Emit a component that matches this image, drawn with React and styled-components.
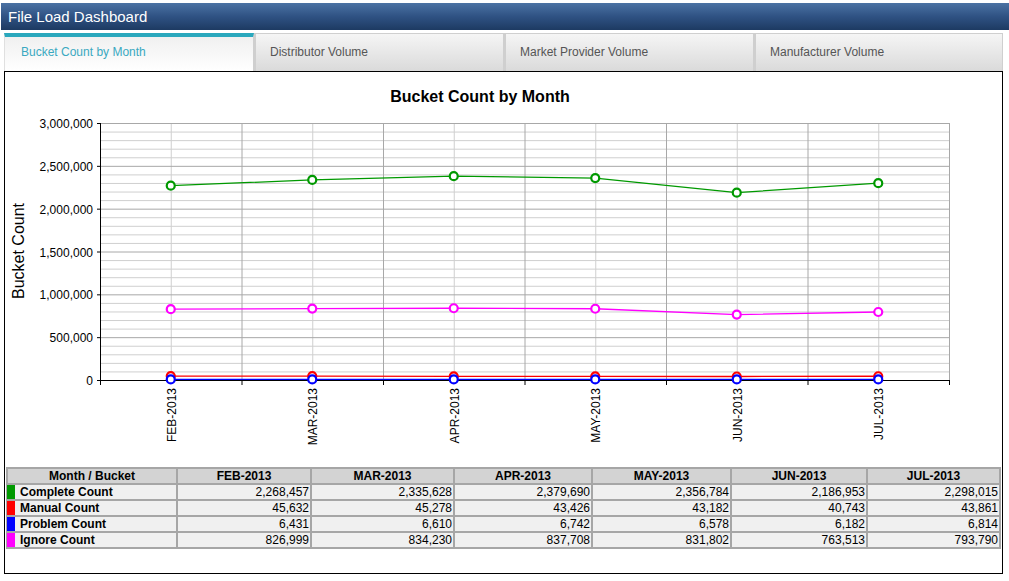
import React from 'react';
import styled, { createGlobalStyle } from 'styled-components';

const GlobalStyle = createGlobalStyle`
  body {
    margin: 0;
    background: #fff;
    font-family: 'Liberation Sans', Arial, sans-serif;
  }
`;

const Tabs = [
  { id: 0, name: 'Bucket Count by Month', width: 250 },
  { id: 1, name: 'Distributor Volume', width: 250 },
  { id: 2, name: 'Market Provider Volume', width: 250 },
  { id: 3, name: 'Manufacturer Volume', width: 249 },
];

const Months = ['FEB-2013', 'MAR-2013', 'APR-2013', 'MAY-2013', 'JUN-2013', 'JUL-2013'];

const Series = [
  { name: 'Complete Count', color: '#009900', values: [2268457, 2335628, 2379690, 2356784, 2186953, 2298015] },
  { name: 'Manual Count', color: '#ff0000', values: [45632, 45278, 43426, 43182, 40743, 43861] },
  { name: 'Problem Count', color: '#0000ff', values: [6431, 6610, 6742, 6578, 6182, 6814] },
  { name: 'Ignore Count', color: '#ff00ff', values: [826999, 834230, 837708, 831802, 763513, 793790] },
];

const ColWidths = [170, 134, 143, 138, 139, 136, 133];

// plot area inside the svg
const PL = 95;
const PT = 51;
const PR = 944;
const PB = 308;
const MAX = 3000000;

const yOf = (v) => PB - (v / MAX) * (PB - PT);
const step = (PR - PL) / 6;
const xOf = (i) => PL + step / 2 + i * step;
const fmt = (n) => n.toLocaleString('en-US');

const Chart = () => {
  const minor = [];
  for (let k = 1; k < 30; k++) {
    if (k % 5 !== 0) minor.push(k * 100000);
  }
  const major = [500000, 1000000, 1500000, 2000000, 2500000, 3000000];
  const drawOrder = [0, 3, 1, 2];

  return (
    <svg width="997" height="390" viewBox="0 0 997 390">
      <text x="475" y="30" textAnchor="middle" fontSize="16" fontWeight="bold" fill="#000">
        Bucket Count by Month
      </text>
      <text
        transform="translate(19 179) rotate(-90)"
        textAnchor="middle"
        fontSize="16"
        fill="#000"
      >
        Bucket Count
      </text>

      {minor.map((v) => (
        <line key={v} x1={PL} x2={PR} y1={yOf(v) + 0.5} y2={yOf(v) + 0.5} stroke="#cfcfcf" strokeWidth="1" />
      ))}
      {Months.map((m, i) => (
        <line key={m} x1={xOf(i) + 0.5} x2={xOf(i) + 0.5} y1={PT} y2={PB} stroke="#cfcfcf" strokeWidth="1" />
      ))}
      {major.map((v) => (
        <line key={v} x1={PL} x2={PR} y1={yOf(v) + 0.5} y2={yOf(v) + 0.5} stroke="#a8a8a8" strokeWidth="1" />
      ))}
      {[1, 2, 3, 4, 5, 6].map((k) => (
        <line key={k} x1={PL + k * step + 0.5} x2={PL + k * step + 0.5} y1={PT} y2={PB} stroke="#a8a8a8" strokeWidth="1" />
      ))}

      <line x1={PL + 0.5} x2={PL + 0.5} y1={PT} y2={PB + 1} stroke="#000" />
      <line x1={PL} x2={PR + 1} y1={PB + 0.5} y2={PB + 0.5} stroke="#000" />
      {[0, ...major].map((v) => (
        <g key={'t' + v}>
          <line x1={PL - 3} x2={PL} y1={yOf(v) + 0.5} y2={yOf(v) + 0.5} stroke="#000" />
          <text x={PL - 7} y={yOf(v) + 5} textAnchor="end" fontSize="12" fill="#000">
            {fmt(v)}
          </text>
        </g>
      ))}
      {[0, 1, 2, 3, 4, 5, 6].map((k) => (
        <line key={'xt' + k} x1={PL + k * step + 0.5} x2={PL + k * step + 0.5} y1={PB} y2={PB + 5} stroke="#000" />
      ))}
      {Months.map((m, i) => (
        <text
          key={'xl' + m}
          transform={`translate(${xOf(i) + 5} 316) rotate(-90)`}
          textAnchor="end"
          fontSize="12"
          fill="#000"
        >
          {m}
        </text>
      ))}

      {drawOrder.map((si) => {
        const s = Series[si];
        const pts = s.values.map((v, i) => `${xOf(i)},${yOf(v)}`).join(' ');
        return (
          <g key={s.name}>
            <polyline points={pts} fill="none" stroke={s.color} strokeWidth="1.3" />
            {s.values.map((v, i) => (
              <circle key={i} cx={xOf(i)} cy={yOf(v)} r="4" fill="#fff" stroke={s.color} strokeWidth="2.2" />
            ))}
          </g>
        );
      })}
    </svg>
  );
};

const App = () => {
  return (
    <Page>
      <GlobalStyle />
      <Header>File Load Dashboard</Header>
      <TabBar>
        {Tabs.map((tab) => (
          <Tab key={tab.id} active={tab.id === 0} width={tab.width}>
            {tab.name}
          </Tab>
        ))}
      </TabBar>
      <Panel>
        <Chart />
        <DataTable>
          <colgroup>
            {ColWidths.map((w, i) => (
              <col key={i} style={{ width: w }} />
            ))}
          </colgroup>
          <thead>
            <tr>
              <HeadCell>Month / Bucket</HeadCell>
              {Months.map((m) => (
                <HeadCell key={m}>{m}</HeadCell>
              ))}
            </tr>
          </thead>
          <tbody>
            {Series.map((s) => (
              <tr key={s.name}>
                <NameCell>
                  <Swatch color={s.color} />
                  {s.name}
                </NameCell>
                {s.values.map((v, i) => (
                  <NumCell key={i}>{fmt(v)}</NumCell>
                ))}
              </tr>
            ))}
          </tbody>
        </DataTable>
      </Panel>
    </Page>
  );
};

export default App;

const Page = styled.div`
  width: 1009px;
  height: 581px;
  padding-top: 3px;
  box-sizing: border-box;
  overflow: hidden;
`;

const Header = styled.div`
  margin-left: 1px;
  height: 27px;
  display: flex;
  align-items: center;
  padding-left: 7px;
  font-size: 15px;
  color: #fff;
  background: linear-gradient(to bottom, #4b72a3 0%, #2f5283 50%, #1d3a62 100%);
`;

const TabBar = styled.div`
  display: flex;
  margin: 3px 0 0 4px;
  width: 999px;
  height: 38px;
`;

const Tab = styled.div`
  flex: 0 0 ${(p) => p.width}px;
  box-sizing: border-box;
  display: flex;
  align-items: center;
  padding: ${(p) => (p.active ? '0 0 4px 16px' : '1px 0 2px 14px')};
  font-size: 12px;
  color: ${(p) => (p.active ? '#3aa9c1' : '#555')};
  border: 1px solid #cfcfcf;
  border-top: ${(p) => (p.active ? '4px solid #2aa8bd' : '1px solid #cfcfcf')};
  border-bottom: none;
  border-left: ${(p) => (p.active ? '1px solid #e0e0e0' : '2px solid #cfcfcf')};
  background: ${(p) =>
    p.active
      ? 'linear-gradient(to bottom, #f0f0f0, #ffffff)'
      : 'linear-gradient(to bottom, #f5f5f5, #dadada)'};
`;

const Panel = styled.div`
  width: 999px;
  height: 503px;
  margin-left: 4px;
  box-sizing: border-box;
  border: 1px solid #000;
  background: #fff;
`;

const DataTable = styled.table`
  margin: 1px 0 0 1px;
  border-collapse: collapse;
  table-layout: fixed;
  width: 993px;
  font-size: 12px;
  color: #000;
`;

const HeadCell = styled.th`
  height: 14px;
  line-height: 14px;
  padding: 0;
  background: #d3d3d3;
  border: 2px solid #a6a6a6;
  font-weight: bold;
  text-align: center;
`;

const NameCell = styled.td`
  height: 14px;
  line-height: 14px;
  padding: 0;
  background: #f0f0f0;
  border: 2px solid #a6a6a6;
  font-weight: bold;
  white-space: nowrap;
`;

const NumCell = styled.td`
  height: 14px;
  line-height: 14px;
  padding: 0 1px 0 0;
  background: #f0f0f0;
  border: 2px solid #a6a6a6;
  text-align: right;
`;

const Swatch = styled.span`
  display: inline-block;
  vertical-align: top;
  width: 8px;
  height: 14px;
  margin: 0 5px 0 -1px;
  background: ${(p) => p.color};
`;
